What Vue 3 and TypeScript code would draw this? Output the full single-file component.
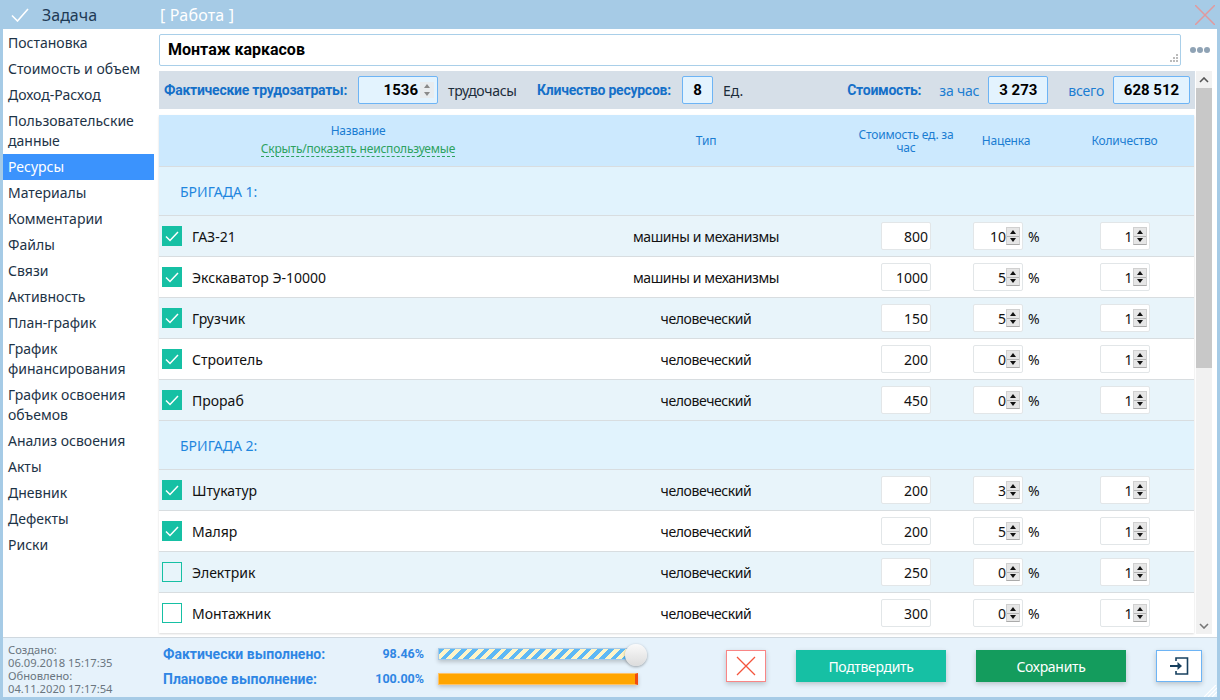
<template>
  <div class="window">
    <!-- шапка окна -->
    <header class="titlebar">
      <div class="title-left">
        <svg class="title-check" width="18" height="14" viewBox="0 0 18 14"><path d="M1 7.5 L6.5 13 L17 1" fill="none" stroke="#fff" stroke-width="1.6" /></svg>
        <span class="title-task">Задача</span>
      </div>
      <span class="title-kind">[ Работа ]</span>
      <svg class="title-close" width="20" height="20" viewBox="0 0 20 20"><path d="M0 0 L20 20 M20 0 L0 20" stroke="#e09a9e" stroke-width="1.5" /></svg>
    </header>

    <div class="body">
      <nav class="side">
        <a v-for="item in menu" :key="item" class="side-item" :class="{ active: item === 'Ресурсы' }">{{ item }}</a>
      </nav>

      <main class="main">
        <div class="name-row">
          <div class="name-box">
            Монтаж каркасов
            <svg class="grip" width="9" height="9" viewBox="0 0 9 9"><path d="M7 0h2v2H7zM4 3h2v2H4zM7 3h2v2H7zM1 6h2v2H1zM4 6h2v2H4zM7 6h2v2H7z" fill="#bbb" /></svg>
          </div>
          <div class="dots"><i></i><i></i><i></i></div>
        </div>

        <div class="stats">
          <b class="stat-label fact">Фактические трудозатраты:</b>
          <div class="stat-box spin-box">1536
            <span class="mini-spin"><i class="up"></i><i class="down"></i></span>
          </div>
          <span class="stat-unit hours">трудочасы</span>
          <b class="stat-label res">Кличество ресурсов:</b>
          <div class="stat-box small">8</div>
          <span class="stat-unit">Ед.</span>
          <b class="stat-label cost">Стоимость:</b>
          <span class="stat-note hour">за час</span>
          <div class="stat-box money">3 273</div>
          <span class="stat-note total">всего</span>
          <div class="stat-box money wide">628 512</div>
        </div>

        <div class="table-wrap">
          <div class="table">
            <div class="thead grid">
              <div class="th">
                <div>Название</div>
                <a class="toggle">Скрыть/показать неиспользуемые</a>
              </div>
              <div class="th">Тип</div>
              <div class="th">Стоимость ед. за час</div>
              <div class="th">Наценка</div>
              <div class="th">Количество</div>
            </div>

            <template v-for="group in groups" :key="group.name">
              <div class="group">{{ group.name }}</div>
              <div v-for="(row, i) in group.rows" :key="row.name" class="row grid" :class="{ odd: i % 2 === 0 }">
                <div class="cell-name">
                  <span class="check" :class="{ on: row.on }">
                    <svg v-if="row.on" width="14" height="11" viewBox="0 0 14 11"><path d="M1 5.5 L5 9.5 L13 1" fill="none" stroke="#fff" stroke-width="1.5" /></svg>
                  </span>
                  <span>{{ row.name }}</span>
                </div>
                <div class="cell-type">{{ row.type }}</div>
                <div class="cell"><div class="input">{{ row.cost }}</div></div>
                <div class="cell">
                  <div class="input spin">{{ row.markup }}<span class="spinner"><i class="up"></i><i class="down"></i></span></div>
                  <span class="pct">%</span>
                </div>
                <div class="cell"><div class="input spin">1<span class="spinner"><i class="up"></i><i class="down"></i></span></div></div>
              </div>
            </template>
          </div>

          <div class="scrollbar">
            <span class="arrow"><svg width="10" height="6" viewBox="0 0 10 6"><path d="M1 5 L5 1 L9 5" fill="none" stroke="#555" stroke-width="1.6" /></svg></span>
            <div class="track"><div class="thumb"></div></div>
            <span class="arrow"><svg width="10" height="6" viewBox="0 0 10 6"><path d="M1 1 L5 5 L9 1" fill="none" stroke="#777" stroke-width="1.6" /></svg></span>
          </div>
        </div>
      </main>
    </div>

    <footer class="footer">
      <div class="dates">
        <div>Создано:</div>
        <div>06.09.2018 15:17:35</div>
        <div>Обновлено:</div>
        <div>04.11.2020 17:17:54</div>
      </div>
      <div class="progress">
        <div class="progress-row">
          <b class="progress-label">Фактически выполнено:</b>
          <b class="progress-value">98.46%</b>
          <div class="bar striped"><span class="knob"></span></div>
        </div>
        <div class="progress-row">
          <b class="progress-label">Плановое выполнение:</b>
          <b class="progress-value">100.00%</b>
          <div class="bar plan"></div>
        </div>
      </div>
      <div class="actions">
        <button class="btn-x" type="button" aria-label="Отмена">
          <svg width="20" height="20" viewBox="0 0 20 20"><path d="M1 1 L19 19 M19 1 L1 19" stroke="#f4543c" stroke-width="1.3" /></svg>
        </button>
        <button class="btn confirm" type="button">Подтвердить</button>
        <button class="btn save" type="button">Сохранить</button>
        <button class="btn-exit" type="button" aria-label="Выход">
          <svg width="19" height="18" viewBox="0 0 19 18"><path d="M6 4 V1 H17.5 V17 H6 V14" fill="none" stroke="#17405f" stroke-width="1.6" /><path d="M0 9 H8" stroke="#17405f" stroke-width="2" /><path d="M7.5 5 L12 9 L7.5 13 Z" fill="#17405f" /></svg>
        </button>
      </div>
      <svg class="corner" width="13" height="12" viewBox="0 0 13 12"><path d="M0 12 L12 0 M4 12 L13 3 M8 12 L13 7" stroke="#fff" stroke-width="1.2" /></svg>
    </footer>
  </div>
</template>

<script setup lang="ts">
interface ResourceRow {
  name: string
  type: string
  cost: number
  markup: number
  on: boolean
}

const menu: string[] = [
  'Постановка',
  'Стоимость и объем',
  'Доход-Расход',
  'Пользовательские данные',
  'Ресурсы',
  'Материалы',
  'Комментарии',
  'Файлы',
  'Связи',
  'Активность',
  'План-график',
  'График финансирования',
  'График освоения объемов',
  'Анализ освоения',
  'Акты',
  'Дневник',
  'Дефекты',
  'Риски'
]

const machine = 'машины и механизмы'
const human = 'человеческий'

const groups: { name: string; rows: ResourceRow[] }[] = [
  {
    name: 'БРИГАДА 1:',
    rows: [
      { name: 'ГАЗ-21', type: machine, cost: 800, markup: 10, on: true },
      { name: 'Экскаватор Э-10000', type: machine, cost: 1000, markup: 5, on: true },
      { name: 'Грузчик', type: human, cost: 150, markup: 5, on: true },
      { name: 'Строитель', type: human, cost: 200, markup: 0, on: true },
      { name: 'Прораб', type: human, cost: 450, markup: 0, on: true }
    ]
  },
  {
    name: 'БРИГАДА 2:',
    rows: [
      { name: 'Штукатур', type: human, cost: 200, markup: 3, on: true },
      { name: 'Маляр', type: human, cost: 200, markup: 5, on: true },
      { name: 'Электрик', type: human, cost: 250, markup: 0, on: false },
      { name: 'Монтажник', type: human, cost: 300, markup: 0, on: false }
    ]
  }
]
</script>

<style>
html,
body {
  margin: 0;
  overflow: hidden;
}
</style>

<style scoped>
.window {
  width: 1220px;
  height: 700px;
  box-sizing: border-box;
  padding: 0 3px 3px;
  background: #a6cbe6;
  display: flex;
  flex-direction: column;
  font-family: "Noto Sans", sans-serif;
  font-size: 14px;
  color: #111;
  overflow: hidden;
}

/* шапка */
.titlebar {
  height: 29px;
  flex-shrink: 0;
  display: flex;
  align-items: center;
  position: relative;
}

.title-left {
  width: 157px;
  display: flex;
  align-items: center;
}

.title-check {
  margin-left: 8px;
  margin-right: 13px;
}

.title-task {
  font-size: 16px;
  color: #1e3a55;
}

.title-kind {
  font-size: 16px;
  color: #fff;
  letter-spacing: 0.2px;
}

.title-close {
  position: absolute;
  right: 2px;
  top: 5px;
}

.body {
  flex: 1;
  min-height: 0;
  display: flex;
  background: #fff;
}

/* боковое меню */
.side {
  width: 151px;
  flex-shrink: 0;
  padding-top: 1px;
}

.side-item {
  display: block;
  padding: 3px 5px;
  line-height: 20px;
  color: #1d3347;
}

.side-item.active {
  background: #3b93fd;
  color: #fff;
}

.main {
  flex: 1;
  min-width: 0;
  padding: 5px 5px 4px;
  display: flex;
  flex-direction: column;
}

.name-row {
  display: flex;
  align-items: center;
  margin-bottom: 5px;
}

.name-box {
  width: 1022px;
  height: 32px;
  box-sizing: border-box;
  border: 1px solid #a9cfe9;
  border-radius: 2px;
  padding-left: 8px;
  line-height: 29px;
  font-family: Roboto, sans-serif;
  font-size: 16px;
  font-weight: 700;
  color: #000;
  position: relative;
}

.grip {
  position: absolute;
  right: 2px;
  bottom: 2px;
}

.dots {
  display: flex;
  gap: 1px;
  margin-left: 9px;
}

.dots i {
  width: 6px;
  height: 6px;
  border-radius: 50%;
  background: #8fa3b5;
}

/* строка показателей */
.stats {
  width: 1036px;
  height: 38px;
  box-sizing: border-box;
  background: #d6dfe8;
  display: flex;
  align-items: center;
  padding: 0 5px;
  margin-bottom: 6px;
  flex-shrink: 0;
}

.stat-label {
  color: #1570c8;
  font-family: Roboto, sans-serif;
  font-size: 14px;
  letter-spacing: -0.25px;
  white-space: nowrap;
}

.fact {
  width: 185px;
}

.stat-box {
  height: 28px;
  box-sizing: border-box;
  border: 1px solid #6db4f5;
  border-radius: 2px;
  background: #e3f3fe;
  font-family: Roboto, sans-serif;
  font-size: 15px;
  font-weight: 700;
  color: #000;
  line-height: 26px;
  text-align: right;
  padding-right: 6px;
  margin-left: 9px;
}

.spin-box {
  width: 80px;
  padding-right: 19px;
  position: relative;
}

.mini-spin {
  position: absolute;
  right: 3px;
  top: 5px;
  width: 14px;
  height: 16px;
  background: #e8ecef;
  display: flex;
  flex-direction: column;
  align-items: center;
  justify-content: space-around;
}

.mini-spin .up {
  width: 0;
  height: 0;
  border: 3px solid transparent;
  border-top: 0;
  border-bottom: 4px solid #8a8a8a;
}

.mini-spin .down {
  width: 0;
  height: 0;
  border: 3px solid transparent;
  border-bottom: 0;
  border-top: 4px solid #8a8a8a;
}

.stat-unit {
  color: #1c2c3a;
  margin-left: 10px;
  white-space: nowrap;
}

.hours {
  width: 69px;
  letter-spacing: -0.3px;
}

.res {
  margin-left: 20px;
  width: 136px;
}

.small {
  width: 31px;
  text-align: center;
  padding-right: 0;
}

.cost {
  margin-left: auto;
}

.stat-note {
  color: #1b7dd2;
  white-space: nowrap;
  letter-spacing: -0.2px;
}

.hour {
  margin-left: 18px;
}

.total {
  margin-left: 20px;
}

.money {
  width: 60px;
  text-align: center;
  padding-right: 0;
}

.wide {
  width: 77px;
}

/* таблица */
.table-wrap {
  flex: 1;
  min-height: 0;
  display: flex;
  position: relative;
}

.table {
  width: 1035px;
  height: 518px;
  overflow: hidden;
  flex-shrink: 0;
  box-shadow: 0 1px 2px rgba(0, 0, 0, 0.15);
}

.grid {
  display: grid;
  grid-template-columns: 398px 298px 102px 98px 139px;
}

.thead {
  height: 52px;
  box-sizing: border-box;
  background: #cce9fe;
  border-bottom: 1px solid #d8dde0;
  font-size: 12px;
  letter-spacing: -0.2px;
  color: #1b7dd2;
}

.th {
  display: flex;
  flex-direction: column;
  align-items: center;
  justify-content: center;
  text-align: center;
  line-height: 13px;
}

.toggle {
  margin-top: 5px;
  color: #2da25f;
  border-bottom: 1px dashed #2da25f;
  line-height: 14px;
}

.group {
  height: 49px;
  box-sizing: border-box;
  background: #e1f3fd;
  border-bottom: 1px solid #d8dde0;
  padding-left: 21px;
  line-height: 50px;
  color: #1f86de;
  font-size: 14px;
}

.row {
  height: 41px;
  box-sizing: border-box;
  background: #fff;
  border-bottom: 1px solid #d8dde0;
  align-items: center;
}

.row.odd {
  background: #e8f4fa;
}

.cell-name {
  display: flex;
  align-items: center;
  padding-left: 3px;
}

.check {
  width: 20px;
  height: 20px;
  box-sizing: border-box;
  border: 1px solid #16c0a4;
  margin-right: 10px;
  display: flex;
  align-items: center;
  justify-content: center;
}

.check.on {
  background: #16c0a4;
}

.cell-type {
  text-align: center;
  letter-spacing: -0.4px;
}

.cell {
  display: flex;
  justify-content: center;
  align-items: center;
}

.input {
  width: 50px;
  height: 28px;
  box-sizing: border-box;
  background: #fff;
  border: 1px solid #e2e6e8;
  border-radius: 2px;
  line-height: 27px;
  text-align: right;
  padding-right: 2px;
  position: relative;
}

.input.spin {
  padding-right: 16px;
}

.spinner {
  position: absolute;
  right: 2px;
  top: 4px;
  width: 14px;
  height: 18px;
  background: linear-gradient(#e6e6e6 0 8px, #b5b5b5 8px 9px, #e6e6e6 9px);
  border: 1px solid #d0d0d0;
  border-bottom-color: #aaa;
  box-sizing: border-box;
  display: flex;
  flex-direction: column;
  align-items: center;
  justify-content: space-around;
}

.spinner .up {
  width: 0;
  height: 0;
  border: 3px solid transparent;
  border-top: 0;
  border-bottom: 4px solid #111;
}

.spinner .down {
  width: 0;
  height: 0;
  border: 3px solid transparent;
  border-bottom: 0;
  border-top: 4px solid #111;
}

.pct {
  margin-left: 5px;
  width: 11px;
}

/* полоса прокрутки */
.scrollbar {
  width: 16px;
  margin-left: 2px;
  height: 563px;
  margin-top: -44px;
  background: #f1f1f1;
  display: flex;
  flex-direction: column;
}

.arrow {
  height: 17px;
  display: flex;
  align-items: center;
  justify-content: center;
}

.track {
  flex: 1;
}

.thumb {
  height: 280px;
  background: #c8c8c8;
}

/* подвал */
.footer {
  height: 60px;
  flex-shrink: 0;
  background: #e6f2fb;
  border-top: 1px solid #cfd8df;
  box-sizing: border-box;
  display: flex;
  align-items: flex-start;
  position: relative;
}

.dates {
  width: 156px;
  padding: 5px 0 0 5px;
  box-sizing: border-box;
  font-size: 11.2px;
  line-height: 13px;
  color: #6a7680;
}

.progress {
  width: 486px;
  display: flex;
  flex-direction: column;
  gap: 6px;
  padding: 6px 0 0 4px;
  box-sizing: border-box;
}

.progress-row {
  display: flex;
  align-items: center;
  height: 19px;
}

.progress-label {
  width: 197px;
  color: #2f86e4;
  font-family: Roboto, sans-serif;
  font-size: 14px;
}

.progress-value {
  width: 64px;
  text-align: right;
  color: #2f86e4;
  font-family: Roboto, sans-serif;
  font-size: 12.5px;
}

.bar {
  width: 200px;
  height: 12px;
  margin-left: 14px;
  position: relative;
  box-sizing: border-box;
  box-shadow: 0 2px 4px rgba(0, 0, 0, 0.2);
}

.striped {
  background: repeating-linear-gradient(135deg, #5cb8f5 0 4px, #fdf4c8 4px 8px);
  border: 1px solid #a3c8e8;
}

.plan {
  background: #ffa500;
  border: 1px solid #ffc266;
  border-right: 3px solid #f04b12;
}

.knob {
  position: absolute;
  right: -10px;
  top: -5px;
  width: 22px;
  height: 22px;
  border-radius: 50%;
  background: linear-gradient(#fafafa, #dcdcdc);
  box-shadow: 0 1px 3px rgba(0, 0, 0, 0.35);
}

.actions {
  flex: 1;
  display: flex;
  padding: 12px 0 0 81px;
}

.btn-x,
.btn-exit {
  padding: 0;
  background: #fff;
  display: flex;
  align-items: center;
  justify-content: center;
  box-shadow: 0 2px 5px rgba(0, 0, 0, 0.2);
  cursor: pointer;
}

.btn-x {
  width: 40px;
  height: 32px;
  border: 1px solid #f98686;
  margin-right: 30px;
}

.btn-exit {
  width: 46px;
  height: 32px;
  border: 1px solid #6db4f5;
  margin-left: 30px;
}

.btn {
  width: 150px;
  height: 32px;
  border: 0;
  color: #fff;
  font-family: inherit;
  font-size: 14px;
  letter-spacing: -0.3px;
  box-shadow: 0 2px 5px rgba(0, 0, 0, 0.2);
  cursor: pointer;
}

.confirm {
  background: #16c0a4;
  margin-right: 30px;
}

.save {
  background: #149c5d;
}

.corner {
  position: absolute;
  right: 0;
  bottom: 0;
}
</style>
